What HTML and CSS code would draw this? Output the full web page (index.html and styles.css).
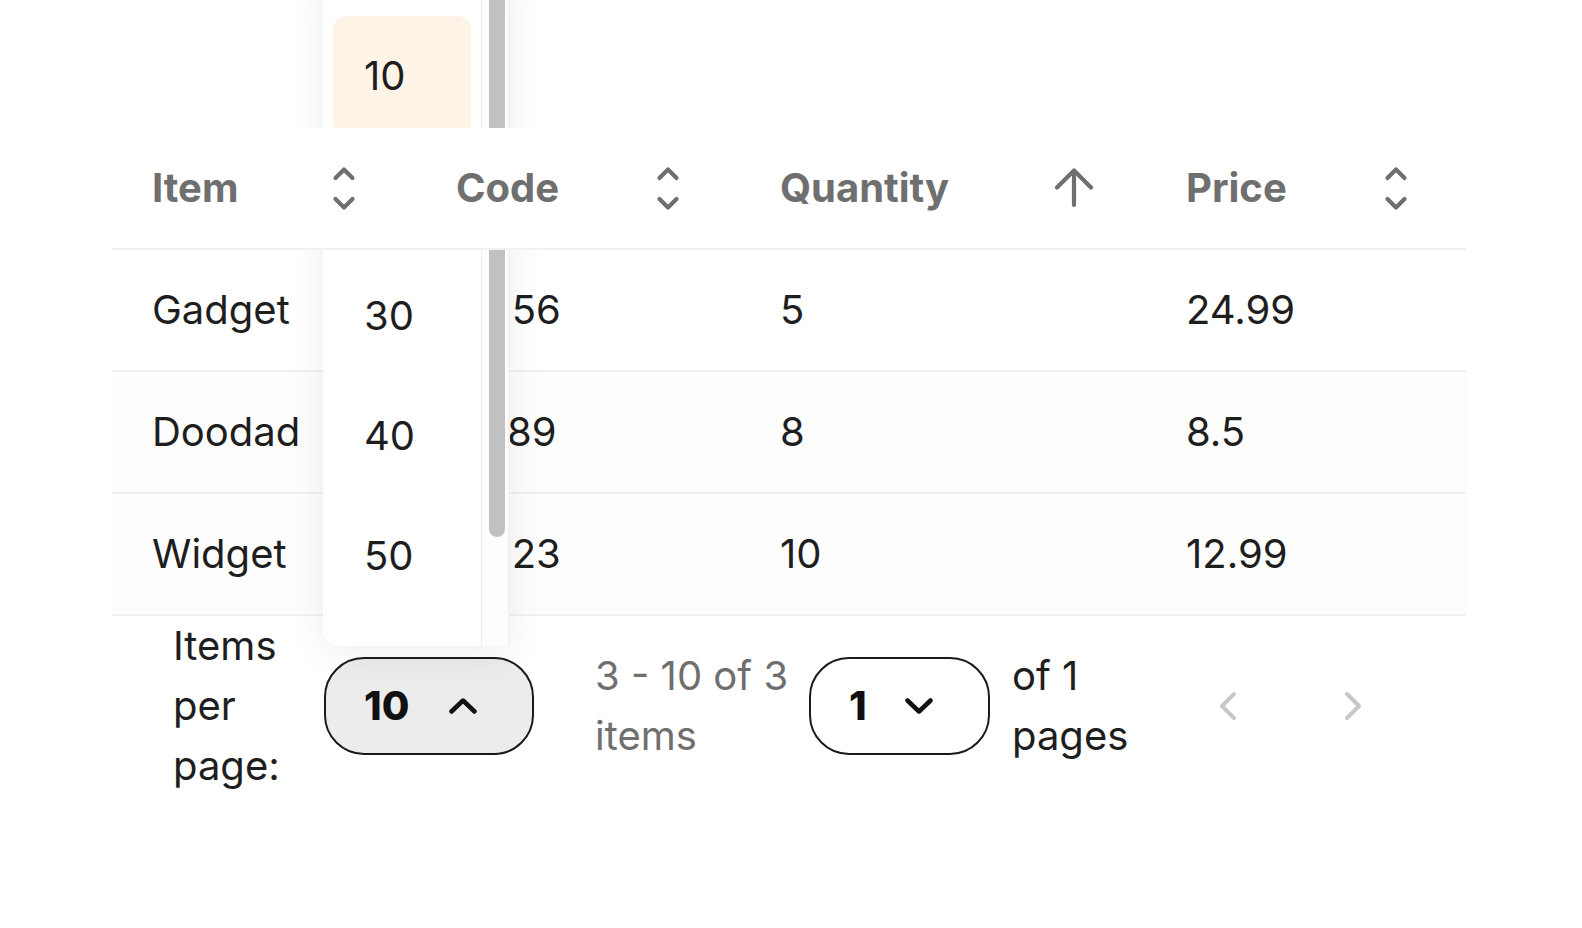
FILE: index.html
```html
<!DOCTYPE html>
<html lang="en">
<head>
<meta charset="utf-8">
<title>Inventory table</title>
<link rel="stylesheet" href="styles.css">
</head>
<body>
<div class="page">
  <div class="table">
    <div class="row head">
      <div class="th"><span>Item</span>
        <svg class="ico" width="40" height="48" viewBox="0 0 40 48"><path d="M11.5 14 L20 5.5 L28.5 14 M11.5 35 L20 43.5 L28.5 35"/></svg>
      </div>
      <div class="th"><span>Code</span>
        <svg class="ico" width="40" height="48" viewBox="0 0 40 48"><path d="M11.5 14 L20 5.5 L28.5 14 M11.5 35 L20 43.5 L28.5 35"/></svg>
      </div>
      <div class="th"><span>Quantity</span>
        <svg class="ico" width="40" height="40" viewBox="0 0 40 40"><path d="M20 37 V3 M3 19.5 L20 2.5 L37 19.5"/></svg>
      </div>
      <div class="th"><span>Price</span>
        <svg class="ico" width="40" height="48" viewBox="0 0 40 48"><path d="M11.5 14 L20 5.5 L28.5 14 M11.5 35 L20 43.5 L28.5 35"/></svg>
      </div>
    </div>
    <div class="row">
      <div class="td">Gadget</div><div class="td">G456</div><div class="td">5</div><div class="td">24.99</div>
    </div>
    <div class="row alt">
      <div class="td">Doodad</div><div class="td">D789</div><div class="td">8</div><div class="td">8.5</div>
    </div>
    <div class="row alt">
      <div class="td">Widget</div><div class="td">W123</div><div class="td">10</div><div class="td">12.99</div>
    </div>

    <div class="pager">
      <div class="pp-label">Items per page:</div>
      <div class="pp-select">
        <div class="menu">
          <div class="menu-list">
            <div class="opt sel">10</div>
            <div class="opt">20</div>
            <div class="opt">30</div>
            <div class="opt">40</div>
            <div class="opt">50</div>
          </div>
          <div class="track"><div class="thumb"></div></div>
        </div>
        <button class="select open"><span>10</span>
          <svg class="chev" width="28" height="20" viewBox="0 0 28 20"><path d="M2.5 15.5 L14 4.5 L25.5 15.5"/></svg>
        </button>
      </div>
      <div class="range">3 - 10 of 3 items</div>
      <button class="select page"><span>1</span>
        <svg class="chev" width="28" height="20" viewBox="0 0 28 20"><path d="M2.5 4.5 L14 15.5 L25.5 4.5"/></svg>
      </button>
      <div class="of">of 1 pages</div>
      <button class="nav prev" aria-label="Previous page">
        <svg width="20" height="32" viewBox="0 0 20 32"><path d="M16 4 L4 16 L16 28"/></svg>
      </button>
      <button class="nav next" aria-label="Next page">
        <svg width="20" height="32" viewBox="0 0 20 32"><path d="M4 4 L16 16 L4 28"/></svg>
      </button>
    </div>
  </div>
</div>
</body>
</html>
```

FILE: styles.css
```css
* { box-sizing: border-box; }

html, body {
  margin: 0;
  background: #ffffff;
}

body {
  font-family: Inter, "Noto Sans", sans-serif;
  font-size: 40px;
  line-height: 60px;
  color: #1e1e1e;
  overflow: hidden;
}

.page {
  padding: 128px 0 0 112px;
}

.table {
  width: 1354px;
}

.row {
  display: grid;
  grid-template-columns: 304px 324px 406px 320px;
  border-bottom: 2px solid #f0f0f5;
}

.row.alt {
  background: #fdfdfd;
}

.head {
  position: relative;
  z-index: 3;
  background: #ffffff;
}

.th {
  display: flex;
  align-items: center;
  justify-content: space-between;
  padding: 30px 52px 30px 40px;
  font-weight: 700;
  color: #6f6f6f;
}

.th:last-child {
  padding-right: 50px;
}

.ico {
  display: block;
  fill: none;
  stroke: #6f6f6f;
  stroke-width: 4.2;
  stroke-linecap: round;
  stroke-linejoin: round;
}

.td {
  padding: 30px 40px;
  white-space: nowrap;
}

/* pager */
.pager {
  display: flex;
  align-items: center;
  padding-left: 61px;
}

.pp-label {
  width: 151px;
}

.pp-select {
  position: relative;
}

.select {
  display: flex;
  align-items: center;
  justify-content: space-between;
  height: 98px;
  padding: 0 55px 0 38px;
  border: 2px solid #1a1a1a;
  border-radius: 40px;
  background: #ffffff;
  font: inherit;
  font-weight: 800;
  color: #111111;
  cursor: pointer;
}

.select.open {
  width: 210px;
  background: #ececec;
}

.select.page {
  width: 181px;
}

.chev {
  display: block;
  fill: none;
  stroke: #111111;
  stroke-width: 4.5;
  stroke-linecap: round;
  stroke-linejoin: round;
}

.range {
  width: 214px;
  margin-left: 61px;
  color: #6f6f6f;
}

.of {
  width: 130px;
  margin-left: 22px;
}

.nav {
  display: flex;
  align-items: center;
  justify-content: center;
  width: 60px;
  height: 60px;
  padding: 0;
  border: none;
  background: none;
}

.nav svg {
  display: block;
  fill: none;
  stroke: #c7c7cb;
  stroke-width: 4;
  stroke-linecap: round;
  stroke-linejoin: round;
}

.prev { margin-left: 56px; }
.next { margin-left: 65px; }

/* open menu */
.menu {
  position: absolute;
  z-index: 2;
  left: -1px;
  bottom: calc(100% + 11px);
  width: 187px;
  height: 670px;
  display: flex;
  background: #ffffff;
  border-radius: 0 0 0 16px;
  box-shadow: 0 6px 40px rgba(0, 0, 0, 0.07);
}

.menu-list {
  flex: 1;
  padding: 40px 10px 30px;
}

.opt {
  padding: 30px 0 30px 31px;
  border-radius: 14px;
  color: #1e1e1e;
}

.opt.sel {
  background: #fdf3e7;
}

.track {
  width: 29px;
  border-left: 1px solid #ebebeb;
  border-right: 2px solid #f1f1f1;
  background: #fdfdfd;
}

.thumb {
  width: 16px;
  height: 561px;
  margin-left: 7px;
  border-radius: 8px;
  background: #c1c1c1;
}
```
